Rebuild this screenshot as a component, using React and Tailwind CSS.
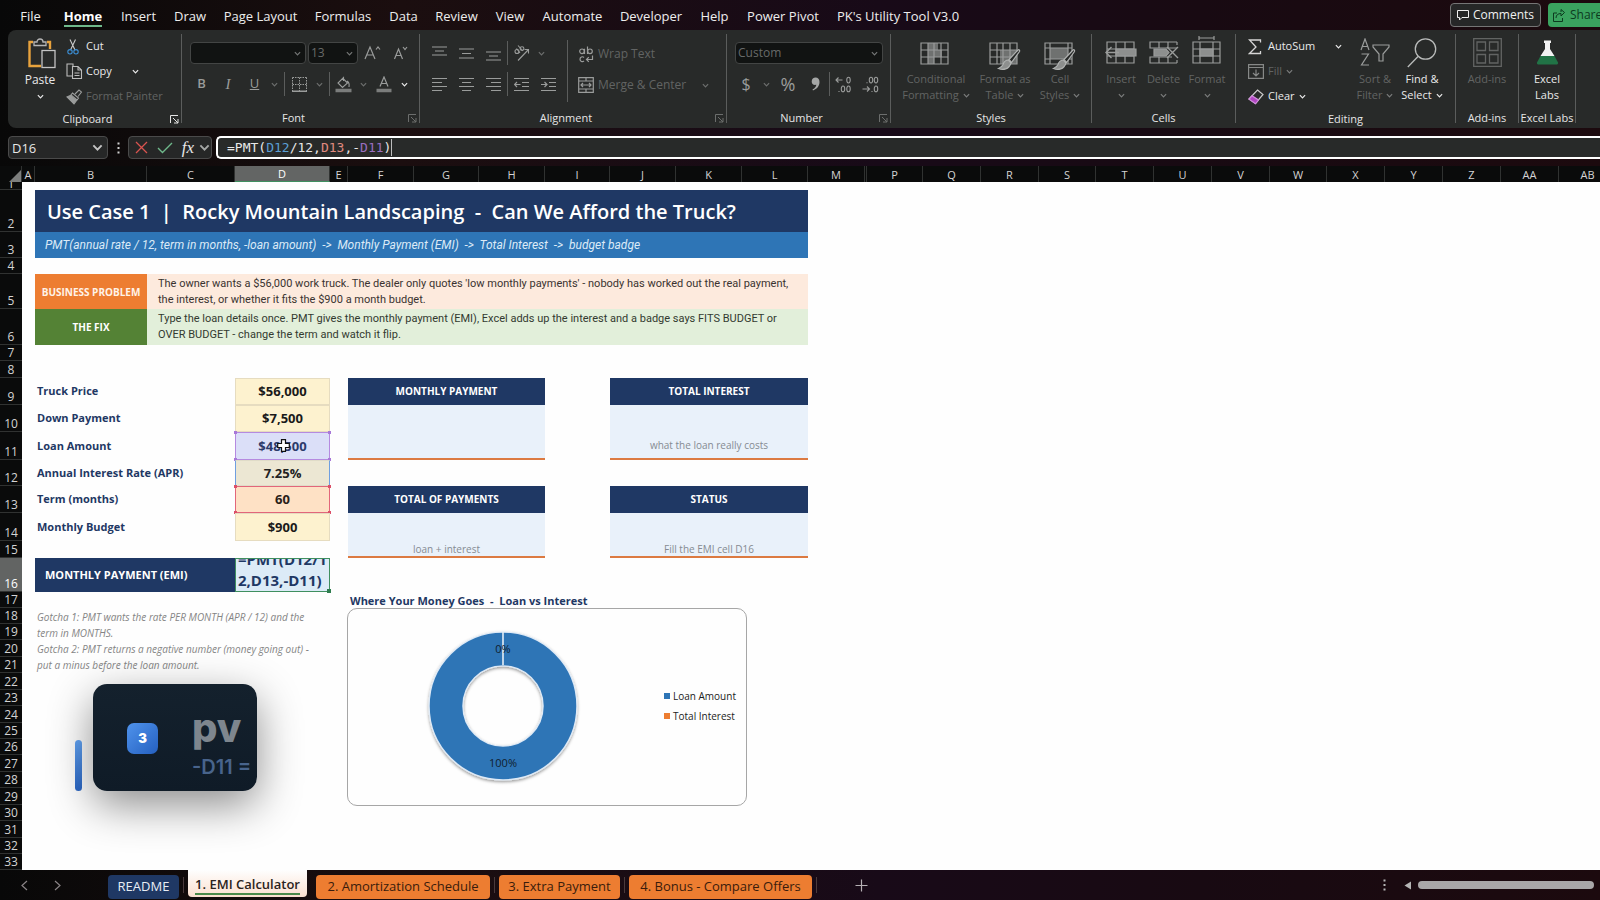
import React from "react";

const GREY = "#9a9c9b";

function Chevron({ className = "text-[#8d8f8e]", size = 7 }) {
  return (
    <svg width={size} height={size} viewBox="0 0 8 8" className={`shrink-0 ${className}`} fill="none" stroke="currentColor" strokeWidth="1.4">
      <path d="M1 2.5 L4 5.5 L7 2.5" />
    </svg>
  );
}

function Launcher({ active }) {
  return (
    <button aria-label="More options" className={`flex w-[14px] items-center justify-center ${active ? "text-[#e4e4e4]" : "text-[#6c6e6d]"}`}>
      <svg width="9" height="9" viewBox="0 0 9 9" fill="none" stroke="currentColor" strokeWidth="1">
        <path d="M0.5 8V0.5H8M3 3L8 8M8 4V8H4" />
      </svg>
    </button>
  );
}

function Group({ width, label, launcher, children }) {
  return (
    <section aria-label={label} className={`flex shrink-0 ${width}`}>
      <div className="flex min-w-0 flex-1 flex-col">
        <div className="flex h-[79px]">{children}</div>
        <div className="flex h-5 items-center">
          <span className="flex-1 text-center text-[11px] leading-5 whitespace-nowrap text-[#e6e6e6]">{label}</span>
          {launcher && <Launcher active={launcher === "on"} />}
        </div>
      </div>
      <div className="mt-1 mb-[5px] w-px bg-[#5b5d5c]" />
    </section>
  );
}

function IconCell({ width, label, children }) {
  return (
    <button aria-label={label} className={`flex h-6 shrink-0 items-center justify-center text-[#9a9c9b] ${width}`}>
      {children}
    </button>
  );
}

const Sep = () => <div className="h-6 w-px shrink-0 bg-[#5b5d5c]" />;

function BigButton({ width, icon, lines, on, chevron }) {
  return (
    <button className={`flex shrink-0 flex-col items-center pt-1 text-[11px] leading-4 ${width} ${on ? "text-[#e9e9e9]" : "text-[#626463]"}`}>
      <span className="flex h-[37px] items-center justify-center">{icon}</span>
      <span className="whitespace-nowrap">{lines[0]}</span>
      <span className="flex h-4 items-center gap-1 whitespace-nowrap">
        {lines[1]}
        {chevron && <Chevron className={on ? "text-[#e9e9e9]" : "text-[#7a7c7b]"} />}
      </span>
    </button>
  );
}

function RowButton({ icon, label, on = true, chevron, far }) {
  return (
    <button className={`flex h-[26px] items-center text-[11px] ${on ? "text-[#e9e9e9]" : "text-[#626463]"}`}>
      <span className="flex w-5 shrink-0 items-center justify-start">{icon}</span>
      <span className="whitespace-nowrap">{label}</span>
      {chevron && <span className={far ? "ml-5" : "ml-1"}><Chevron className={on ? "text-[#e9e9e9]" : "text-[#7a7c7b]"} /></span>}
    </button>
  );
}

/* ---------- icons ---------- */

const PasteIcon = () => (
  <svg width="28" height="31" viewBox="0 0 28 31" fill="none">
    <path d="M5 4H1.5V28H13M19 4H22V11" stroke="#e8a33d" strokeWidth="2.4" />
    <path d="M6 7.5V4H9C9 0 15 0 15 4H18V7.5Z" stroke="#b5b5b5" strokeWidth="1.3" fill="#282a29" />
    <rect x="14" y="12.5" width="13" height="17" stroke="#c4c4c4" strokeWidth="1.3" fill="#282a29" />
  </svg>
);
const CutIcon = () => (
  <svg width="14" height="16" viewBox="0 0 14 16" fill="none" strokeWidth="1.1">
    <path d="M4 0.5L9 11M9.5 0.5L4.5 11" stroke="#c9c9c9" />
    <circle cx="4" cy="12.8" r="2.2" stroke="#3b8fd6" />
    <circle cx="10" cy="12.8" r="2.2" stroke="#3b8fd6" />
  </svg>
);
const CopyIcon = () => (
  <svg width="17" height="17" viewBox="0 0 17 17" fill="none" stroke="#bdbdbd" strokeWidth="1.1">
    <path d="M7 3V1H1V13H6" />
    <path d="M6.5 3.5H12L15.5 7V15.5H6.5Z M12 3.5V7H15.5M8.5 10H13.5M8.5 12.5H13.5" />
  </svg>
);
const PainterIcon = () => (
  <svg width="17" height="16" viewBox="0 0 17 16" fill="none" stroke={GREY} strokeWidth="1.1">
    <path d="M9 5L13 1L15.5 3L12 7.5M6.5 4L12.5 9L11 11L5 6Z" />
    <path d="M4.5 6.5L10.5 11.5L8 15L1 8Z" fill={GREY} />
  </svg>
);
const lineIcon = (lines, h = 15) => (
  <svg width="15" height={h} viewBox={`0 0 15 ${h}`} stroke={GREY} strokeWidth="1.2">
    {lines.map(([x1, x2, y]) => <path key={y} d={`M${x1} ${y}H${x2}`} />)}
  </svg>
);
const BordersIcon = () => (
  <svg width="15" height="15" viewBox="0 0 15 15" fill="none" stroke={GREY}>
    <path d="M0.5 0.5H14.5M0.5 0.5V14M14.5 0.5V14M7.5 0.5V14M0.5 7.5H14.5" strokeDasharray="1.5 1" />
    <path d="M0 14.3H15" strokeWidth="1.4" />
  </svg>
);
const FillIcon = () => (
  <svg width="17" height="17" viewBox="0 0 17 17" fill="none" stroke={GREY} strokeWidth="1.1">
    <path d="M7.5 2L12.5 7L7.5 11.5L3 7L8.5 1.5V5M12 5C14 6 14.5 8 14 11" />
    <path d="M0.5 14.5H16.5" strokeWidth="3.4" stroke="#7b7d7c" />
  </svg>
);
const FontColorIcon = () => (
  <svg width="16" height="17" viewBox="0 0 16 17" fill="none" stroke={GREY} strokeWidth="1.2">
    <path d="M4 10.5L8 1L12 10.5M5.3 7.5H10.7" />
    <path d="M0.5 14.5H15.5" strokeWidth="3.4" stroke="#7b7d7c" />
  </svg>
);
const GrowIcon = ({ down }) => (
  <svg width="17" height="16" viewBox="0 0 17 16" fill="none" stroke={GREY} strokeWidth="1.2">
    {down ? <path d="M2.5 14L6.5 4L10.5 14M4 10.5H9M11 2L13 4.5L15 2" /> : <path d="M1 14L6 2L11 14M2.8 10H9.2M12 4.5L14 2L16 4.5" />}
  </svg>
);
const OrientIcon = () => (
  <svg width="17" height="16" viewBox="0 0 17 16" fill="none" stroke={GREY} strokeWidth="1.1">
    <path d="M5 15.5L15.5 4.5M11.5 4.5H15.5V8.5" />
    <circle cx="4" cy="6.5" r="2" />
    <path d="M3.5 3.5L7 8M5 0.5L10 6" />
    <circle cx="9" cy="3.6" r="1.9" />
  </svg>
);
const IndentIcon = ({ right }) => (
  <svg width="15" height="15" viewBox="0 0 15 15" fill="none" stroke={GREY} strokeWidth="1.2">
    <path d="M0 1.5H15M8 5.5H15M8 9.5H15M0 13.5H15" />
    {right ? <path d="M0 7.5H6M3.5 5L6 7.5L3.5 10" /> : <path d="M0.5 7.5H6.5M3 5L0.5 7.5L3 10" />}
  </svg>
);
const WrapIcon = () => (
  <svg width="15" height="17" viewBox="0 0 15 17" fill="none" stroke={GREY} strokeWidth="1.2">
    <circle cx="3" cy="5.3" r="2.3" /><path d="M5.5 2.8V8" />
    <path d="M8.5 0.5V8" /><circle cx="11" cy="5.3" r="2.3" />
    <path d="M5 11.5C3.5 10 1 11 1 13.3C1 15.6 3.5 16.3 5 15M13.5 9.5V13.5H7.5M9.8 11.2L7.5 13.5L9.8 15.8" />
  </svg>
);
const MergeIcon = () => (
  <svg width="16" height="16" viewBox="0 0 16 16" fill="none" stroke={GREY} strokeWidth="1.2">
    <path d="M0.7 0.7H15.3V15.3H0.7ZM0.7 4H15.3M0.7 12H15.3M8 0.7V4M8 12V15.3M3 8H13M5 6L3 8L5 10M11 6L13 8L11 10" />
  </svg>
);
const DecimalIcon = ({ dec }) => (
  <svg width="17" height="17" viewBox="0 0 17 17" fill="none" stroke={GREY} strokeWidth="1.1">
    {dec ? (
      <path d="M5 7.3V6.3M9 1.2C11.3 1.2 11.3 7 9 7C6.7 7 6.7 1.2 9 1.2ZM14 1.2C16.3 1.2 16.3 7 14 7C11.7 7 11.7 1.2 14 1.2ZM0.5 13H7.5M5 10.5L7.5 13L5 15.5M10 16V15M14 10C16.3 10 16.3 15.8 14 15.8C11.7 15.8 11.7 10 14 10Z" />
    ) : (
      <path d="M7.5 4H1M3.5 1.5L1 4L3.5 6.5M13.5 1.2C15.8 1.2 15.8 7 13.5 7C11.2 7 11.2 1.2 13.5 1.2ZM4 16V15M8 10C10.3 10 10.3 15.8 8 15.8C5.7 15.8 5.7 10 8 10ZM13.5 10C15.8 10 15.8 15.8 13.5 15.8C11.2 15.8 11.2 10 13.5 10Z" />
    )}
  </svg>
);
const Brush = () => (
  <g>
    <path d="M29 8L20 17.5L22.5 20.5L30.5 9.5C31 8 30 7.3 29 8Z" fill="#282a29" stroke="#b0b2b1" />
    <path d="M19.5 18C16.5 18 15 19.5 14 22.5C13 25 11 26 9.5 26.5C14 28.5 20 27.5 22 21Z" fill="#8d8f8e" stroke="#b0b2b1" />
  </g>
);
const StyleIcon = ({ kind }) => (
  <svg width="32" height="29" viewBox="0 0 32 29" fill="none" stroke={GREY} strokeWidth="1.2" className="mt-2">
    {kind === "cond" && <path d="M8 1H18V8H22V15H14V22H8Z" fill="#6f7170" stroke="none" />}
    {kind === "table" && <path d="M11 8H28V22H11Z" fill="#6f7170" stroke="none" />}
    {kind === "cell" && <path d="M6 6H24V17H6Z" fill="#6f7170" stroke="none" />}
    {kind === "cell" ? (
      <path d="M1 1H28V22H1ZM1 6H28M1 17H28M6 1V22M24 1V22" />
    ) : (
      <path d="M1 1H28V22H1ZM1 8H28M1 15H28M8 1V22M14 1V22M21 1V22" />
    )}
    {kind !== "cond" && <Brush />}
  </svg>
);
const CellsIcon = ({ kind }) => (
  <svg width="32" height="30" viewBox="0 0 32 30" fill="none" stroke={GREY} strokeWidth="1.2" className="-mt-1">
    {kind === "insert" && (
      <>
        <path d="M2 6H29V27H2ZM2 13H29M2 20H29M11 6V27M20 6V27" />
        <path d="M11 13H31V20H11Z" fill="#8d8f8e" />
        <path d="M14 16.5H1M6.5 11L1 16.5L6.5 22" strokeWidth="1.4" />
      </>
    )}
    {kind === "delete" && (
      <>
        <path d="M29 6H2V12H29M29 27H2V21H24M11 6V12M20 6V12M11 21V27M20 21V27M29 6V9M29 24V27" />
        <path d="M6 13H18L21 16.5L18 20H6Z" fill="#8d8f8e" />
        <path d="M19 11L30 22M30 11L19 22" strokeWidth="1.4" />
      </>
    )}
    {kind === "format" && (
      <>
        <path d="M2 6H29V27H2ZM2 13H29M2 20H29M9 6V27M22 6V27M8 2H23M8 0V4M23 0V4" />
        <path d="M9 13H22V20H9Z" fill="#8d8f8e" />
      </>
    )}
  </svg>
);
const SigmaIcon = () => (
  <svg width="14" height="16" viewBox="0 0 14 16" fill="none" stroke="#d6d6d6" strokeWidth="1.3"><path d="M12.5 3.5V1H1.5L8 8L1.5 14.5H12.5V12" /></svg>
);
const FillDownIcon = () => (
  <svg width="16" height="15" viewBox="0 0 16 15" fill="none" stroke="#868887" strokeWidth="1.2"><path d="M0.6 0.6H15.4V14.4H0.6ZM0.6 3.5H15.4M8 5.5V12M5 9L8 12L11 9" /></svg>
);
const EraserIcon = () => (
  <svg width="16" height="16" viewBox="0 0 16 16" fill="none" strokeWidth="1.2">
    <path d="M9.5 1L15 5.5L7.5 14.5L1 10Z" stroke="#c9c9c9" />
    <path d="M4 6.8L10.5 11L7.5 14.8L1 10.2Z" fill="#b146c2" stroke="#d08bdb" />
  </svg>
);
const SortIcon = () => (
  <svg width="30" height="29" viewBox="0 0 30 29" fill="none" stroke={GREY} strokeWidth="1.2">
    <path d="M1 12L5 1L9 12M2.5 8.5H7.5M1.5 16H8.5L1.5 27H9M13 7H29V9L23 16V23H19V16L13 9Z" />
  </svg>
);
const FindIcon = () => (
  <svg width="30" height="30" viewBox="0 0 30 30" fill="none" stroke="#b9bbba" strokeWidth="1.3"><circle cx="18.5" cy="11" r="10.2" /><path d="M11 18.5L0.8 29" /></svg>
);
const AddinsIcon = () => (
  <svg width="29" height="29" viewBox="0 0 29 29" fill="none" stroke="#626463" strokeWidth="1.3"><path d="M0.7 0.7H28.3V28.3H0.7ZM4 4H12.5V12.5H4ZM16.5 4H25V12.5H16.5ZM4 16.5H12.5V25H4ZM16.5 16.5H25V25H16.5Z" /></svg>
);
const FlaskIcon = () => (
  <svg width="23" height="25" viewBox="0 0 23 25"><path d="M8 0.5H15V3H14V9L18.5 16H4.5L9 9V3H8Z" fill="#f2f2f2" /><path d="M4.5 16H18.5L22 22.5Q22.5 24.5 20 24.5H3Q0.5 24.5 1 22.5Z" fill="#217346" /></svg>
);

/* ---------- ribbon ---------- */

const MENU = [
  ["File", "w-[47px]"], ["Home", "w-[58px]"], ["Insert", "w-[53px]"], ["Draw", "w-[50px]"], ["Page Layout", "w-[91px]"],
  ["Formulas", "w-[74px]"], ["Data", "w-[47px]"], ["Review", "w-[59px]"], ["View", "w-[48px]"], ["Automate", "w-[77px]"],
  ["Developer", "w-[80px]"], ["Help", "w-[47px]"], ["Power Pivot", "w-[90px]"], ["PK's Utility Tool V3.0", "w-[140px]"],
];

function MenuBar() {
  return (
    <header className="flex h-[30px] items-center overflow-hidden pl-[7px]">
      <nav className="flex h-full shrink-0">
        {MENU.map(([name, w]) => (
          <button key={name} className={`flex shrink-0 justify-center pt-[5px] text-[13px] leading-[22px] whitespace-nowrap text-[#ededed] ${w}`}>
            {name === "Home" ? <span className="h-[22px] border-b-2 border-[#6fb88b] font-bold text-white">{name}</span> : name}
          </button>
        ))}
      </nav>
      <div className="-mr-[18px] ml-auto flex shrink-0 gap-[7px]">
        <button className="flex h-6 w-[91px] items-center justify-center gap-1 rounded border border-[#757575] bg-[#262727] text-[12px] font-medium text-[#f0f0f0]">
          <svg width="12" height="12" viewBox="0 0 12 12" fill="none" stroke="currentColor"><path d="M0.5 1.5H11.5V8.5H5L2.5 11V8.5H0.5Z" /></svg>
          Comments
        </button>
        <button className="flex h-6 w-[70px] items-center gap-[5px] rounded bg-[#3aa35f] pl-[5px] text-[12px] text-[#0d3a1f]">
          <svg width="12" height="13" viewBox="0 0 12 13" fill="none" stroke="currentColor"><path d="M4 4H0.5V12.5H9.5V9M3 9C3 6 5 4.5 8 4.5V7L11.5 3.5L8 0.5V3" /></svg>
          Share
        </button>
      </div>
    </header>
  );
}

function Dropdown({ label, value, width }) {
  return (
    <label className={`relative flex h-[22px] shrink-0 items-center ${width}`}>
      <select aria-label={label} disabled className="h-full w-full appearance-none rounded border border-[#434544] bg-[#111312] pl-[2px] text-[12px] leading-5 text-[#686a69]">
        <option>{value}</option>
      </select>
      <span className="pointer-events-none absolute right-[5px]"><Chevron className="text-[#747675]" /></span>
    </label>
  );
}

function Ribbon() {
  return (
    <div className="ml-2 flex h-[98px] overflow-hidden rounded-l-lg bg-[#282a29]">
      <Group width="w-[174px]" label="Clipboard" launcher="on">
        <button className="flex w-[58px] flex-col items-center pt-1 pl-[6px] text-[12px] leading-4 text-[#e9e9e9]">
          <span className="flex h-[38px] items-center pl-1"><PasteIcon /></span>
          <span>Paste</span>
          <span className="flex h-4 items-center"><Chevron className="text-[#e9e9e9]" /></span>
        </button>
        <div className="flex flex-col pt-1">
          <RowButton icon={<CutIcon />} label="Cut" />
          <RowButton icon={<CopyIcon />} label="Copy" chevron far />
          <RowButton icon={<PainterIcon />} label="Format Painter" on={false} />
        </div>
      </Group>

      <Group width="w-[238px]" label="Font" launcher="off">
        <div className="flex flex-col gap-2 pt-3">
          <div className="flex h-[22px] items-center gap-[2px] pl-2">
            <Dropdown label="Font" value="" width="w-[116px]" />
            <Dropdown label="Font size" value="13" width="w-[50px]" />
            <IconCell label="Increase font size" width="w-6"><GrowIcon /></IconCell>
            <IconCell label="Decrease font size" width="w-7"><GrowIcon down /></IconCell>
          </div>
          <div className="flex items-center pl-[6px]">
            <IconCell label="Bold" width="w-[27px]"><b className="text-[13px] font-semibold">B</b></IconCell>
            <IconCell label="Italic" width="w-[26px]"><i className="font-['Liberation_Serif',serif] text-[15px]">I</i></IconCell>
            <IconCell label="Underline" width="w-[27px]"><u className="text-[13px]">U</u></IconCell>
            <IconCell label="Underline styles" width="w-3"><Chevron className="text-[#6c6e6d]" /></IconCell>
            <span className="w-1" /><Sep />
            <IconCell label="Borders" width="w-7"><BordersIcon /></IconCell>
            <IconCell label="Border styles" width="w-3"><Chevron className="text-[#6c6e6d]" /></IconCell>
            <span className="w-1" /><Sep />
            <IconCell label="Fill colour" width="w-[26px]"><FillIcon /></IconCell>
            <IconCell label="Fill colours" width="w-[14px]"><Chevron className="text-[#6c6e6d]" /></IconCell>
            <IconCell label="Font colour" width="w-7"><FontColorIcon /></IconCell>
            <IconCell label="Font colours" width="w-3"><Chevron className="text-[#e9e9e9]" /></IconCell>
          </div>
        </div>
      </Group>

      <Group width="w-[307px]" label="Alignment" launcher="off">
        <div className="flex w-[147px] shrink-0 flex-col gap-[7px] pt-[11px] pl-[6px]">
          <div className="flex items-center">
            <IconCell label="Top align" width="w-[27px]">{lineIcon([[0, 15, 1], [3, 12, 5], [0, 15, 9]])}</IconCell>
            <IconCell label="Middle align" width="w-[27px]">{lineIcon([[0, 15, 3], [3, 12, 7.5], [0, 15, 12]])}</IconCell>
            <IconCell label="Bottom align" width="w-[27px]">{lineIcon([[0, 15, 6], [3, 12, 10], [0, 15, 14]])}</IconCell>
            <Sep />
            <IconCell label="Orientation" width="w-[27px]"><OrientIcon /></IconCell>
            <IconCell label="Orientation options" width="w-3"><Chevron className="text-[#6c6e6d]" /></IconCell>
          </div>
          <div className="flex items-center">
            <IconCell label="Align left" width="w-[27px]">{lineIcon([[0, 15, 1.5], [0, 10, 5.5], [0, 15, 9.5], [0, 10, 13.5]])}</IconCell>
            <IconCell label="Centre" width="w-[27px]">{lineIcon([[0, 15, 1.5], [3, 12, 5.5], [0, 15, 9.5], [3, 12, 13.5]])}</IconCell>
            <IconCell label="Align right" width="w-[27px]">{lineIcon([[0, 15, 1.5], [5, 15, 5.5], [0, 15, 9.5], [5, 15, 13.5]])}</IconCell>
            <Sep />
            <IconCell label="Decrease indent" width="w-[27px]"><IndentIcon /></IconCell>
            <IconCell label="Increase indent" width="w-[27px]"><IndentIcon right /></IconCell>
          </div>
        </div>
        <div className="mt-[10px] h-[62px] w-px shrink-0 bg-[#5b5d5c]" />
        <div className="flex flex-col gap-[7px] pt-3 pl-[6px] text-[12px] text-[#626463]">
          <button className="flex h-6 items-center whitespace-nowrap"><span className="flex w-6 justify-center"><WrapIcon /></span>Wrap Text</button>
          <button className="flex h-6 items-center whitespace-nowrap">
            <span className="flex w-6 justify-center"><MergeIcon /></span>Merge &amp; Center
            <span className="ml-4"><Chevron className="text-[#6c6e6d]" /></span>
          </button>
        </div>
      </Group>

      <Group width="w-[164px]" label="Number" launcher="off">
        <div className="flex flex-col gap-2 pt-3 pl-2">
          <Dropdown label="Number format" value="Custom" width="w-[148px]" />
          <div className="flex items-center">
            <IconCell label="Currency" width="w-[22px]"><span className="text-[16px]">$</span></IconCell>
            <IconCell label="Currency options" width="w-[18px]"><Chevron className="text-[#6c6e6d]" /></IconCell>
            <IconCell label="Percent" width="w-[26px]"><span className="text-[18px]">%</span></IconCell>
            <IconCell label="Comma style" width="w-7">
              <svg width="9" height="14" viewBox="0 0 9 14"><path d="M4.5 0.5C7 0.5 8.5 2.2 8.5 5C8.5 9 6 12 2 13.5L1.5 12.5C4 11.2 5.2 9.6 5.3 7.8C2.5 8.5 0.7 6.8 0.7 4.4C0.7 2 2.5 0.5 4.5 0.5Z" fill="#a5a7a6" /></svg>
            </IconCell>
            <Sep />
            <IconCell label="Increase decimal" width="w-[27px]"><DecimalIcon /></IconCell>
            <IconCell label="Decrease decimal" width="w-[26px]"><DecimalIcon dec /></IconCell>
          </div>
        </div>
      </Group>

      <Group width="w-[201px]" label="Styles">
        <div className="flex pl-[6px]">
          <BigButton width="w-[78px]" icon={<StyleIcon kind="cond" />} lines={["Conditional", "Formatting"]} chevron />
          <BigButton width="w-[60px]" icon={<StyleIcon kind="table" />} lines={["Format as", "Table"]} chevron />
          <BigButton width="w-[50px]" icon={<StyleIcon kind="cell" />} lines={["Cell", "Styles"]} chevron />
        </div>
      </Group>

      <Group width="w-[144px]" label="Cells">
        <div className="flex pl-2">
          <BigButton width="w-[42px]" icon={<CellsIcon kind="insert" />} lines={["Insert", ""]} chevron />
          <BigButton width="w-[43px]" icon={<CellsIcon kind="delete" />} lines={["Delete", ""]} chevron />
          <BigButton width="w-[44px]" icon={<CellsIcon kind="format" />} lines={["Format", ""]} chevron />
        </div>
      </Group>

      <Group width="w-[220px]" label="Editing">
        <div className="flex w-[116px] shrink-0 flex-col pt-1 pl-3">
          <RowButton icon={<SigmaIcon />} label="AutoSum" chevron far />
          <RowButton icon={<FillDownIcon />} label="Fill" on={false} chevron />
          <RowButton icon={<EraserIcon />} label="Clear" chevron />
        </div>
        <BigButton width="w-[46px]" icon={<SortIcon />} lines={["Sort &", "Filter"]} chevron />
        <BigButton width="w-12" icon={<FindIcon />} lines={["Find &", "Select"]} on chevron />
      </Group>

      <Group width="w-[63px]" label="Add-ins">
        <BigButton width="w-full" icon={<AddinsIcon />} lines={["Add-ins", ""]} />
      </Group>
      <Group width="w-[57px]" label="Excel Labs">
        <BigButton width="w-full" icon={<FlaskIcon />} lines={["Excel", "Labs"]} on />
      </Group>
    </div>
  );
}

function FormulaBar() {
  return (
    <div className="mt-2 flex h-[23px] items-stretch overflow-hidden pl-2">
      <label className="relative flex w-[100px] shrink-0 items-center">
        <input aria-label="Name box" defaultValue="D16" className="h-full w-full rounded border border-[#4a4a4a] bg-[#262727] pl-[3px] text-[13px] text-[#e8e8e8]" />
        <span className="pointer-events-none absolute right-[5px]"><Chevron size={11} className="text-[#c4c4c4]" /></span>
      </label>
      <div className="flex w-5 shrink-0 items-center justify-center">
        <svg width="3" height="12" viewBox="0 0 3 12" fill="#cfcfcf"><path d="M0.5 0.5h2v2h-2zM0.5 5h2v2h-2zM0.5 9.5h2v2h-2z" /></svg>
      </div>
      <div className="flex w-[84px] shrink-0 items-center rounded border border-[#4a4a4a] bg-[#262727]">
        <button aria-label="Cancel" className="flex w-6 justify-center"><svg width="13" height="13" viewBox="0 0 13 13" stroke="#d9534f" strokeWidth="1.3"><path d="M1 1L12 12M12 1L1 12" /></svg></button>
        <button aria-label="Enter" className="flex w-6 justify-center"><svg width="16" height="12" viewBox="0 0 16 12" fill="none" stroke="#6fb88b" strokeWidth="1.4"><path d="M1 6L5.5 10.5L15 1" /></svg></button>
        <button aria-label="Insert function" className="w-[22px] text-center font-['Liberation_Serif',serif] text-[17px] leading-5 text-[#e8e8e8] italic">fx</button>
        <Chevron size={11} className="text-[#a5a7a6]" />
      </div>
      <div className="relative ml-1 min-w-0 flex-1 font-['DejaVu_Sans_Mono',monospace] text-[13px]">
        <input aria-label="Formula" defaultValue="=PMT(D12/12,D13,-D11)" className="h-full w-full rounded-l-[5px] border-2 border-r-0 border-white bg-[#282a29] pl-[9px] text-transparent" />
        <div aria-hidden="true" className="pointer-events-none absolute inset-y-0 left-[11px] flex items-center text-[#e8e8e8]">
          =PMT(<span className="text-[#5b9fd4]">D12</span>/12,<span className="text-[#e08a80]">D13</span>,-<span className="text-[#9a6fc0]">D11</span>)
          <span className="h-[17px] w-px bg-[#bdbdbd]" />
        </div>
      </div>
    </div>
  );
}

/* ---------- sheet ---------- */

const COLS = [
  ["A", "w-[13px]"], ["B", "w-[112px]"], ["C", "w-[88px]"], ["D", "w-[95px]"], ["E", "w-[18px]"],
  ["F", "w-[66px]"], ["G", "w-[65px]"], ["H", "w-[66px]"], ["I", "w-[65px]"], ["J", "w-[66px]"], ["K", "w-[66px]"], ["L", "w-[66px]"],
  ["M", "w-[57px]"], ["", "w-[2px]"], ["P", "w-[56px]"], ["Q", "w-[58px]"], ["R", "w-[58px]"], ["S", "w-[57px]"], ["T", "w-[58px]"],
  ["U", "w-[58px]"], ["V", "w-[58px]"], ["W", "w-[57px]"], ["X", "w-[58px]"], ["Y", "w-[58px]"], ["Z", "w-[58px]"], ["AA", "w-[58px]"], ["AB", ""],
];

const LOWER_ROWS = [
  [22, "h-[17px]"], [23, "h-[16px]"], [24, "h-[17px]"], [25, "h-[16px]"], [26, "h-[16px]"], [27, "h-[17px]"],
  [28, "h-[16px]"], [29, "h-[17px]"], [30, "h-[16px]"], [31, "h-[17px]"], [32, "h-[16px]"], [33, "h-[16px]"],
];

function Row({ n, h, selected, children }) {
  return (
    <tr className={h}>
      <th
        scope="row"
        className={`border-b border-[#303231] p-0 align-bottom text-[12px] leading-[15px] font-normal ${selected ? "bg-[#626463] text-white" : "bg-[#0a0b0b] text-[#d4d4d4]"}`}
      >
        {n === 1 ? <div className="flex h-[7px] items-end justify-center overflow-hidden leading-[10px]">1</div> : n}
      </th>
      {children || <td colSpan={27} />}
    </tr>
  );
}

const Gap = ({ n = 1 }) => <td colSpan={n} className="p-0" />;
const Head = ({ children }) => <td colSpan={3} className="bg-[#1f3864] p-0 pb-px text-center text-[10px] leading-4 font-bold text-white">{children}</td>;
const Body = () => <td colSpan={3} className="bg-[#e9f1fa] p-0" />;
const Foot = ({ children }) => (
  <td colSpan={3} className="border-b-2 border-[#dc7a41] bg-[#e9f1fa] p-0 text-center text-[10px] leading-[14px] text-[#858b92]">{children}</td>
);
const Label = ({ children }) => <td colSpan={2} className="p-0 pb-px pl-[2px] text-[11px] leading-4 font-bold text-[#1f3864]">{children}</td>;

function Handles({ color }) {
  return (
    <>
      <span className={`absolute -top-[2px] -left-[2px] size-[3px] ${color}`} />
      <span className={`absolute -top-[2px] -right-[2px] size-[3px] ${color}`} />
      <span className={`absolute -bottom-[2px] -left-[2px] size-[3px] ${color}`} />
      <span className={`absolute -right-[2px] -bottom-[2px] size-[3px] ${color}`} />
    </>
  );
}

const Value = ({ tone = "border-[#e6dcc0] bg-[#fdf2cf] text-[#1a1a1a]", children }) => (
  <td className={`relative border p-0 pb-px text-center text-[13px] leading-4 font-bold ${tone}`}>{children}</td>
);

function Sheet() {
  return (
    <table className="w-full min-w-[1617px] table-fixed border-separate border-spacing-0 bg-[#fefefe]">
      <colgroup>
        <col className="w-[22px]" />
        {COLS.map(([c, w], i) => <col key={i} className={w} />)}
      </colgroup>
      <thead>
        <tr className="h-4">
          <th aria-label="Select all" className="border-r border-[#303231] bg-[#0a0b0b] p-0 align-bottom">
            <svg width="12" height="12" viewBox="0 0 12 12" className="ml-auto"><path d="M12 0V12H0Z" fill="#7c7e7d" /></svg>
          </th>
          {COLS.map(([c], i) => (
            <th
              key={i}
              scope="col"
              className={`border-r p-0 text-[11px] leading-[15px] font-normal ${c === "D" ? "border-b border-r-[#303231] border-b-[#3f8f5f] bg-[#636564] text-white" : "border-[#303231] bg-[#0a0b0b] text-[#d4d4d4]"}`}
            >
              {c}
            </th>
          ))}
        </tr>
      </thead>
      <tbody>
        <Row n={1} h="h-[8px]" />
        <Row n={2} h="h-[42px]">
          <Gap />
          <td colSpan={11} className="bg-[#1f3864] p-0 pt-px pl-3 text-[20px] leading-7 font-semibold whitespace-pre text-white">{"Use Case 1  |  Rocky Mountain Landscaping  -  Can We Afford the Truck?"}</td>
          <Gap n={15} />
        </Row>
        <Row n={3} h="h-[26px]">
          <Gap />
          <td colSpan={11} className="bg-[#2e75b6] p-0 pl-[10px] font-['Roboto',sans-serif] text-[12px] leading-4 whitespace-pre text-[#dceaf7] italic">{"PMT(annual rate / 12, term in months, -loan amount)  ->  Monthly Payment (EMI)  ->  Total Interest  ->  budget badge"}</td>
          <Gap n={15} />
        </Row>
        <Row n={4} h="h-[16px]" />
        <Row n={5} h="h-[35px]">
          <Gap />
          <td className="bg-[#ed7d31] p-0 text-center text-[10px] leading-4 font-bold whitespace-nowrap text-[#fff3e8]">BUSINESS PROBLEM</td>
          <td colSpan={10} className="bg-[#fdeadd] p-0 pl-[11px] font-['Roboto',sans-serif] text-[11px] leading-4 whitespace-nowrap text-[#3a3330]">
            The owner wants a $56,000 work truck. The dealer only quotes 'low monthly payments' - nobody has worked out the real payment,
            <br />
            the interest, or whether it fits the $900 a month budget.
          </td>
          <Gap n={15} />
        </Row>
        <Row n={6} h="h-[36px]">
          <Gap />
          <td className="bg-[#548235] p-0 text-center text-[10px] leading-4 font-bold text-white">THE FIX</td>
          <td colSpan={10} className="bg-[#e2efda] p-0 pl-[11px] font-['Roboto',sans-serif] text-[11px] leading-4 whitespace-nowrap text-[#333a30]">
            Type the loan details once. PMT gives the monthly payment (EMI), Excel adds up the interest and a badge says FITS BUDGET or
            <br />
            OVER BUDGET - change the term and watch it flip.
          </td>
          <Gap n={15} />
        </Row>
        <Row n={7} h="h-[16px]" />
        <Row n={8} h="h-[17px]" />
        <Row n={9} h="h-[27px]">
          <Gap /><Label>Truck Price</Label><Value>$56,000</Value><Gap />
          <Head>MONTHLY PAYMENT</Head><Gap /><Head>TOTAL INTEREST</Head><Gap n={15} />
        </Row>
        <Row n={10} h="h-[27px]">
          <Gap /><Label>Down Payment</Label><Value>$7,500</Value><Gap />
          <Body /><Gap /><Body /><Gap n={15} />
        </Row>
        <Row n={11} h="h-[28px]">
          <Gap /><Label>Loan Amount</Label>
          <Value tone="border-[#b58ae0] bg-[#dbdff8] text-[#2c3a6b]">
            $48,500
            <Handles color="bg-[#a878d8]" />
            <svg width="13" height="13" viewBox="0 0 13 13" className="absolute top-[6px] left-[41px]"><path d="M4.5 0.7H8.5V4.5H12.3V8.5H8.5V12.3H4.5V8.5H0.7V4.5H4.5Z" fill="#fff" stroke="#111" strokeWidth="1.2" /></svg>
          </Value>
          <Gap /><Foot /><Gap /><Foot>what the loan really costs</Foot><Gap n={15} />
        </Row>
        <Row n={12} h="h-[26px]">
          <Gap /><Label>Annual Interest Rate (APR)</Label>
          <Value tone="border-x-[#6f9fe0] border-y-[#e0dcc8] bg-[#ece7d3] text-[#222]">7.25%</Value>
          <Gap n={23} />
        </Row>
        <Row n={13} h="h-[27px]">
          <Gap /><Label>Term (months)</Label>
          <Value tone="border-[#e2667a] bg-[#fee1c5] text-[#2a2018]">60<Handles color="bg-[#dc5068]" /></Value>
          <Gap /><Head>TOTAL OF PAYMENTS</Head><Gap /><Head>STATUS</Head><Gap n={15} />
        </Row>
        <Row n={14} h="h-[28px]">
          <Gap /><Label>Monthly Budget</Label><Value>$900</Value><Gap />
          <Body /><Gap /><Body /><Gap n={15} />
        </Row>
        <Row n={15} h="h-[17px]">
          <Gap n={5} /><Foot>loan + interest</Foot><Gap /><Foot>Fill the EMI cell D16</Foot><Gap n={15} />
        </Row>
        <Row n={16} h="h-[34px]" selected>
          <Gap />
          <td colSpan={2} className="bg-[#1f3864] p-0 pl-[10px] text-[11px] leading-4 font-bold text-white">MONTHLY PAYMENT (EMI)</td>
          <td className="relative border border-[#3f8f5f] bg-[#dcebf7] p-0">
            <div className="flex h-8 items-end overflow-hidden pl-[2px] text-[15px] leading-[21px] font-bold text-[#1f3864]">
              <span className="whitespace-nowrap">=PMT(D12/1<br />2,D13,-D11)</span>
            </div>
            <span className="absolute -right-[2px] -bottom-[2px] size-1 bg-[#2f7d4f]" />
          </td>
          <Gap n={23} />
        </Row>
        <Row n={17} h="h-[16px]">
          <Gap n={5} />
          <td colSpan={7} className="p-0 pl-[2px] text-[11px] leading-[15px] font-bold whitespace-pre text-[#1f3864]">{"Where Your Money Goes  -  Loan vs Interest"}</td>
          <Gap n={15} />
        </Row>
        <Row n={18} h="h-[16px]">
          <Gap />
          <td colSpan={3} rowSpan={4} className="p-0 pl-[2px] text-[10px] leading-4 whitespace-nowrap text-[#858585] italic">
            Gotcha 1: PMT wants the rate PER MONTH (APR / 12) and the
            <br />
            term in MONTHS.
            <br />
            Gotcha 2: PMT returns a negative number (money going out) -
            <br />
            put a minus before the loan amount.
          </td>
          <Gap n={23} />
        </Row>
        <Row n={19} h="h-[16px]"><Gap /><Gap n={23} /></Row>
        <Row n={20} h="h-[17px]"><Gap /><Gap n={23} /></Row>
        <Row n={21} h="h-[16px]"><Gap /><Gap n={23} /></Row>
        {LOWER_ROWS.map(([n, h]) => <Row key={n} n={n} h={h} />)}
      </tbody>
    </table>
  );
}

function DonutChart() {
  return (
    <figure aria-label="Loan vs Interest" className="absolute top-[442px] left-[347px] flex h-[198px] w-[400px] items-center rounded-[10px] border border-[#a6a6a6] bg-[#fefefe]">
      <svg width="290" height="190" viewBox="0 0 290 190" className="shrink-0">
        <defs>
          <filter id="ring" filterUnits="userSpaceOnUse" x="60" y="0" width="190" height="190">
            <feDropShadow dx="0" dy="1.5" stdDeviation="1.5" floodColor="#000" floodOpacity="0.4" />
          </filter>
        </defs>
        <g filter="url(#ring)">
          <circle cx="155" cy="94" r="57" fill="none" stroke="#dfeaf6" strokeWidth="35" />
          <circle cx="155" cy="94" r="57" fill="none" stroke="#2e75b6" strokeWidth="32.5" />
        </g>
        <path d="M155 20V53" stroke="#e6eff8" strokeWidth="1.6" />
        <text x="155" y="41" textAnchor="middle" fontSize="11" fill="#10202e">0%</text>
        <text x="155" y="155" textAnchor="middle" fontSize="11" fill="#10202e">100%</text>
      </svg>
      <figcaption className="mb-[2px] ml-[26px] flex flex-col gap-1 text-[10px] leading-4 whitespace-nowrap text-[#1c1c1c]">
        <span className="flex items-center gap-[3px]"><span className="size-[6px] bg-[#2e75b6]" />Loan Amount</span>
        <span className="flex items-center gap-[3px]"><span className="size-[6px] bg-[#ed7d31]" />Total Interest</span>
      </figcaption>
    </figure>
  );
}

function Callout() {
  return (
    <>
      <div className="absolute top-[574px] left-[75px] h-[51px] w-[7px] rounded-sm bg-linear-to-b from-[#62a4f5] to-[#2b66c4]" />
      <div className="absolute top-[518px] left-[93px] flex h-[107px] w-[164px] overflow-visible rounded-[14px] bg-linear-to-b from-[#14212d] to-[#0f1b27] pt-[23px] pl-[34px] font-['Inter',sans-serif] shadow-[0_14px_44px_rgba(0,0,0,0.45)]">
        <span className="mt-[16px] flex size-[31px] items-center justify-center rounded-[7px] bg-linear-to-br from-[#4f93ec] to-[#2560c0] text-[13px] font-black text-white">3</span>
        <div className="ml-[34px] flex flex-col whitespace-nowrap">
          <span className="text-[40px] leading-[42px] font-extrabold text-[#7e868e]">pv</span>
          <span className="mt-[6px] text-[20px] leading-6 font-semibold text-[#48648c]">-D11 =</span>
        </div>
      </div>
    </>
  );
}

const TABS = [
  ["2. Amortization Schedule", "w-[174px]"],
  ["3. Extra Payment", "w-[121px]"],
  ["4. Bonus - Compare Offers", "w-[183px]"],
];

const TabSep = () => <span className="h-4 w-px shrink-0 bg-[#4a3a3c]" />;

function TabBar() {
  return (
    <footer className="flex h-[30px] shrink-0 items-center overflow-hidden text-[13px]">
      <button aria-label="Previous sheet" className="ml-[15px] flex w-[18px] justify-center text-[#8a8486]"><svg width="7" height="11" viewBox="0 0 7 11" fill="none" stroke="currentColor" strokeWidth="1.2"><path d="M6 1L1 5.5L6 10" /></svg></button>
      <button aria-label="Next sheet" className="ml-[15px] flex w-[18px] justify-center text-[#8a8486]"><svg width="7" height="11" viewBox="0 0 7 11" fill="none" stroke="currentColor" strokeWidth="1.2"><path d="M1 1L6 5.5L1 10" /></svg></button>
      <div className="ml-[42px] flex h-full shrink-0 items-center gap-1">
        <button className="mt-[3px] h-6 w-[71px] rounded bg-[#1f3864] text-[#e8edf5]">README</button>
        <TabSep />
        <button className="flex h-[27px] w-[119px] justify-center self-start rounded-b bg-linear-to-b from-[#fefefe] to-[#fbe0cf] font-semibold text-[#2b2320]">
          <span className="h-[25px] border-b-2 border-[#4a8a4a] leading-[29px] whitespace-nowrap">1. EMI Calculator</span>
        </button>
        <span className="w-px" />
        {TABS.map(([name, w]) => (
          <React.Fragment key={name}>
            <button className={`mt-[3px] h-6 shrink-0 rounded bg-[#ed7d31] whitespace-nowrap text-[#3a1c0c] ${w}`}>{name}</button>
            <TabSep />
          </React.Fragment>
        ))}
      </div>
      <button aria-label="New sheet" className="ml-[38px]"><svg width="13" height="13" viewBox="0 0 13 13" stroke="#b5b0b4" strokeWidth="1.2"><path d="M6.5 0.5V12.5M0.5 6.5H12.5" /></svg></button>
      <div className="mr-[6px] ml-auto flex items-center">
        <svg width="3" height="12" viewBox="0 0 3 12" fill="#b5b5b5"><path d="M0.5 0.5h2v2h-2zM0.5 5h2v2h-2zM0.5 9.5h2v2h-2z" /></svg>
        <svg width="8" height="9" viewBox="0 0 8 9" fill="#b5b5b5" className="ml-[18px]"><path d="M7 0.5V8.5L0.5 4.5Z" /></svg>
        <div className="ml-[6px] h-2 w-[176px] rounded-full bg-[#a9a7a8]" />
      </div>
    </footer>
  );
}

export default function App() {
  return (
    <div className="flex h-screen flex-col overflow-hidden bg-[linear-gradient(90deg,#080808_0%,#1b0e0f_25%,#180a18_55%,#180a12_75%,#1c0a0e_100%)] font-['Open_Sans','Noto_Sans',sans-serif]">
      <MenuBar />
      <Ribbon />
      <FormulaBar />
      <main className="relative mt-[7px] min-h-0 flex-1 overflow-hidden bg-[#fefefe]">
        <Sheet />
        <DonutChart />
        <Callout />
      </main>
      <TabBar />
    </div>
  );
}
